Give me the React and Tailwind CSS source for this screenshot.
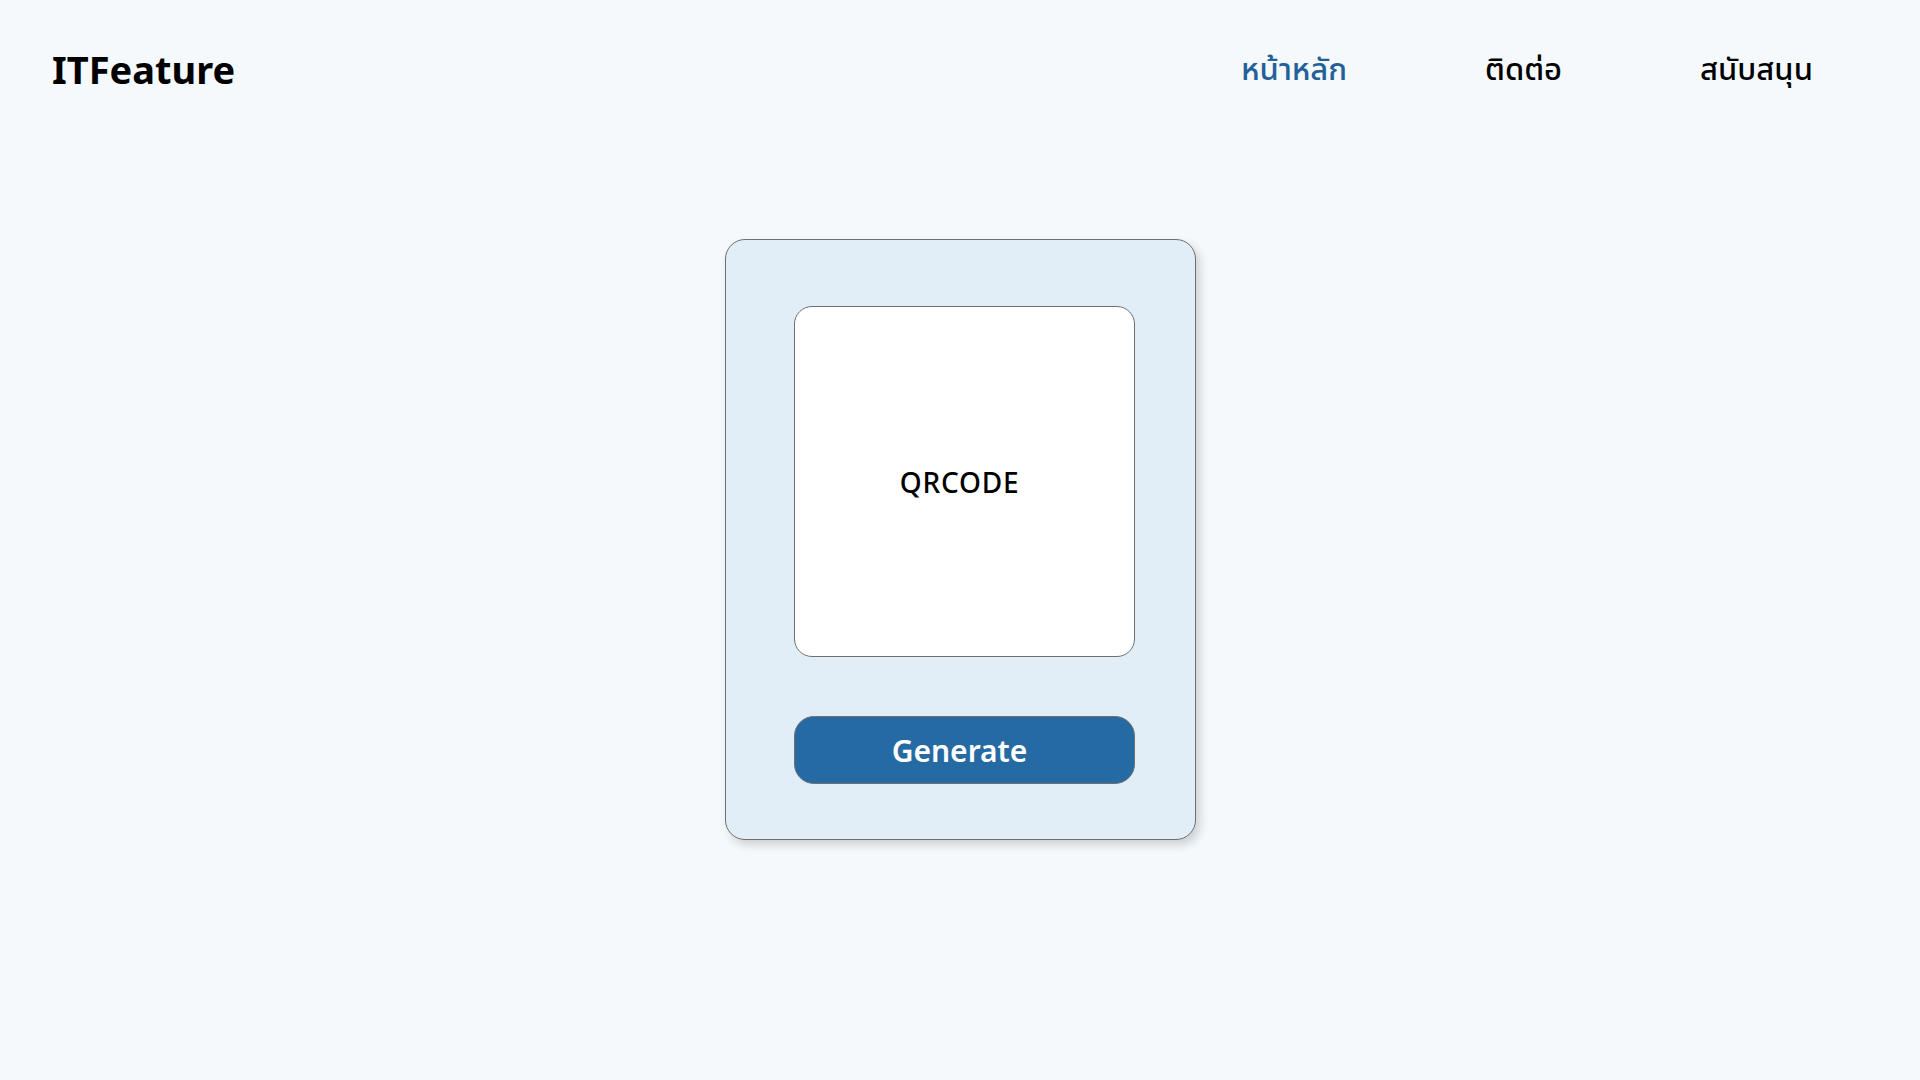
function Header() {
  return (
    <header className="flex items-center justify-between pl-[52px] pr-[107px] h-[140px] pb-[1px]">
      <h1 className="text-[38px] font-bold text-black leading-none -mt-[1px]">
        ITFeature
      </h1>
      <nav className="flex items-center gap-[138px] text-[31px] leading-none -mt-[2px]">
        <a className="text-[#22609a] font-medium">หน้าหลัก</a>
        <a className="text-black font-medium">ติดต่อ</a>
        <a className="text-black font-medium">สนับสนุน</a>
      </nav>
    </header>
  );
}

function QrCard() {
  return (
    <div className="w-[471px] h-[601px] bg-[#e1edf7] border border-[#707070] rounded-[20px] shadow-[4px_5px_10px_rgba(0,0,0,0.16)] pt-[66px] pl-[68px]">
      <div className="w-[341px] h-[351px] bg-white border border-[#707070] rounded-[18px] flex items-center justify-center pr-[9px]">
        <span className="text-[28px] text-black font-medium tracking-[0.8px]">QRCODE</span>
      </div>
      <button className="mt-[59px] w-[341px] h-[68px] bg-[#266aa3] border border-[#707070] rounded-[20px] text-white text-[30px] font-semibold flex items-center justify-center pr-[9px]">
        Generate
      </button>
    </div>
  );
}

export default function App() {
  return (
    <div
      className="min-h-screen bg-[#f5f9fc]"
      style={{ fontFamily: '"Noto Sans", "Noto Sans Thai", "Liberation Sans", sans-serif' }}
    >
      <Header />
      <main className="flex justify-center pt-[99px]">
        <QrCard />
      </main>
    </div>
  );
}
